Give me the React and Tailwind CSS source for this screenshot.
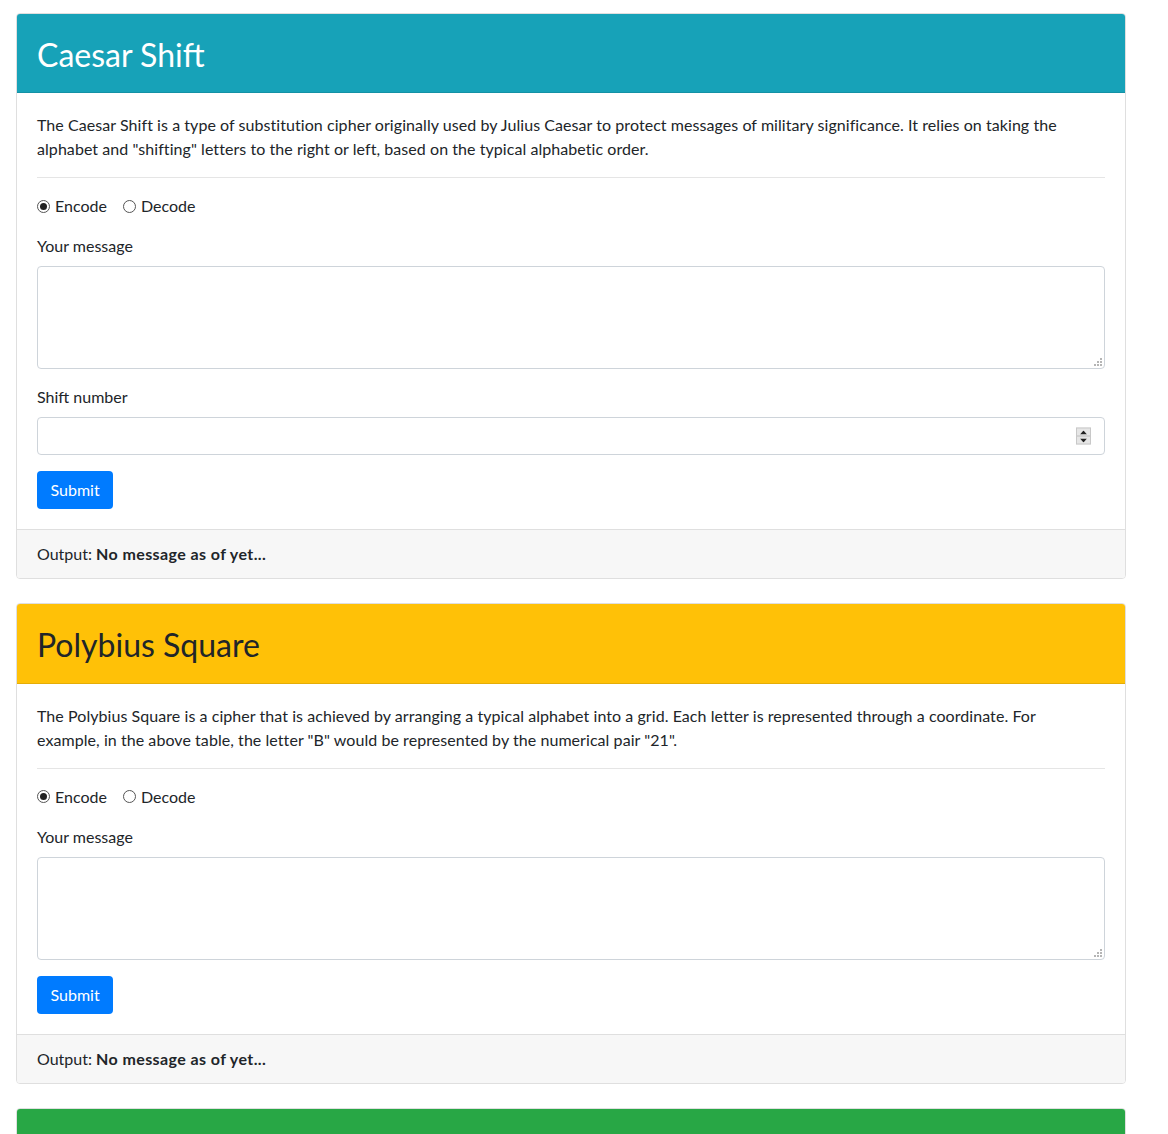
import { useState } from 'react';

const FONT = { fontFamily: '"Lato", "Noto Sans", "Liberation Sans", sans-serif' };

function Radio({ checked, label, onClick }) {
  return (
    <label className="inline-flex items-center mr-4 cursor-pointer" onClick={onClick}>
      <span className="w-[13px] h-[13px] rounded-full border border-[#555] bg-white flex items-center justify-center mr-[5px]">
        {checked && <span className="w-[7px] h-[7px] rounded-full bg-[#222]" />}
      </span>
      <span>{label}</span>
    </label>
  );
}

function Spinner() {
  return (
    <div className="absolute right-[14px] top-1/2 -translate-y-1/2 w-[15px] h-[17px] bg-[#e6e6e6] border border-[#c8c8c8] flex flex-col">
      <div className="flex-1 flex items-center justify-center border-b border-[#bdbdbd]">
        <svg width="7" height="4" viewBox="0 0 7 4"><path d="M0 4 L3.5 0 L7 4 Z" fill="#222" /></svg>
      </div>
      <div className="flex-1 flex items-center justify-center">
        <svg width="7" height="4" viewBox="0 0 7 4"><path d="M0 0 L3.5 4 L7 0 Z" fill="#222" /></svg>
      </div>
    </div>
  );
}

// dotted resize grip in the corner of the textarea
function Grip() {
  return (
    <svg className="absolute right-[3px] bottom-[3px]" width="8" height="8" viewBox="0 0 8 8">
      <rect x="6" y="0" width="2" height="2" fill="#b5b5b5" />
      <rect x="3" y="3" width="2" height="2" fill="#b5b5b5" />
      <rect x="6" y="3" width="2" height="2" fill="#b5b5b5" />
      <rect x="0" y="6" width="2" height="2" fill="#b5b5b5" />
      <rect x="3" y="6" width="2" height="2" fill="#b5b5b5" />
      <rect x="6" y="6" width="2" height="2" fill="#b5b5b5" />
    </svg>
  );
}

function CipherCard({ title, headerClass, children, withShift }) {
  const [mode, setMode] = useState('encode');
  return (
    <div className="border border-[#dfdfdf] rounded-[4px] bg-white mb-6 overflow-hidden">
      <div className={`px-5 pt-[22px] pb-[18px] border-b border-black/10 ${headerClass}`}>
        <h2 className="text-[32px] leading-[1.2] font-normal">{title}</h2>
      </div>
      <div className="p-5">
        <p className="mb-4 tracking-[0.06px]">{children}</p>
        <hr className="border-0 border-t border-black/10 my-4" />
        <div className="mb-4 flex items-center">
          <Radio checked={mode === 'encode'} label="Encode" onClick={() => setMode('encode')} />
          <Radio checked={mode === 'decode'} label="Decode" onClick={() => setMode('decode')} />
        </div>
        <div className="mb-4">
          <label className="block mb-2">Your message</label>
          <div className="relative">
            <textarea className="block w-full h-[103px] border border-[#ced4da] rounded-[4px] px-3 py-1.5 outline-none resize-none" />
            <Grip />
          </div>
        </div>
        {withShift && (
          <div className="mb-4">
            <label className="block mb-2">Shift number</label>
            <div className="relative">
              <input type="text" className="block w-full h-[38px] border border-[#ced4da] rounded-[4px] px-3 py-1.5 outline-none" />
              <Spinner />
            </div>
          </div>
        )}
        <button className="bg-[#007bff] text-white rounded-[4px] px-[13.5px] h-[38px] leading-6">Submit</button>
      </div>
      <div className="bg-[#f7f7f7] border-t border-[#dfdfdf] px-5 py-3">
        Output: <strong className="font-bold tracking-[0.4px]">No message as of yet...</strong>
      </div>
    </div>
  );
}

export default function App() {
  return (
    <div className="bg-white text-[#212529] text-base leading-6 min-h-screen" style={FONT}>
      <div className="w-[1110px] ml-4 pt-[13px]">
        <CipherCard title="Caesar Shift" headerClass="bg-[#17a2b8] text-white" withShift>
          The Caesar Shift is a type of substitution cipher originally used by Julius Caesar to protect messages of military significance. It relies on taking the<br />
          alphabet and "shifting" letters to the right or left, based on the typical alphabetic order.
        </CipherCard>
        <CipherCard title="Polybius Square" headerClass="bg-[#ffc107] text-[#212529]">
          The Polybius Square is a cipher that is achieved by arranging a typical alphabet into a grid. Each letter is represented through a coordinate. For<br />
          example, in the above table, the letter "B" would be represented by the numerical pair "21".
        </CipherCard>
        <div className="border border-[#dfdfdf] rounded-[4px] bg-white overflow-hidden">
          <div className="h-[80px] bg-[#28a745] border-b border-black/10" />
          <div className="h-[200px]" />
        </div>
      </div>
    </div>
  );
}
